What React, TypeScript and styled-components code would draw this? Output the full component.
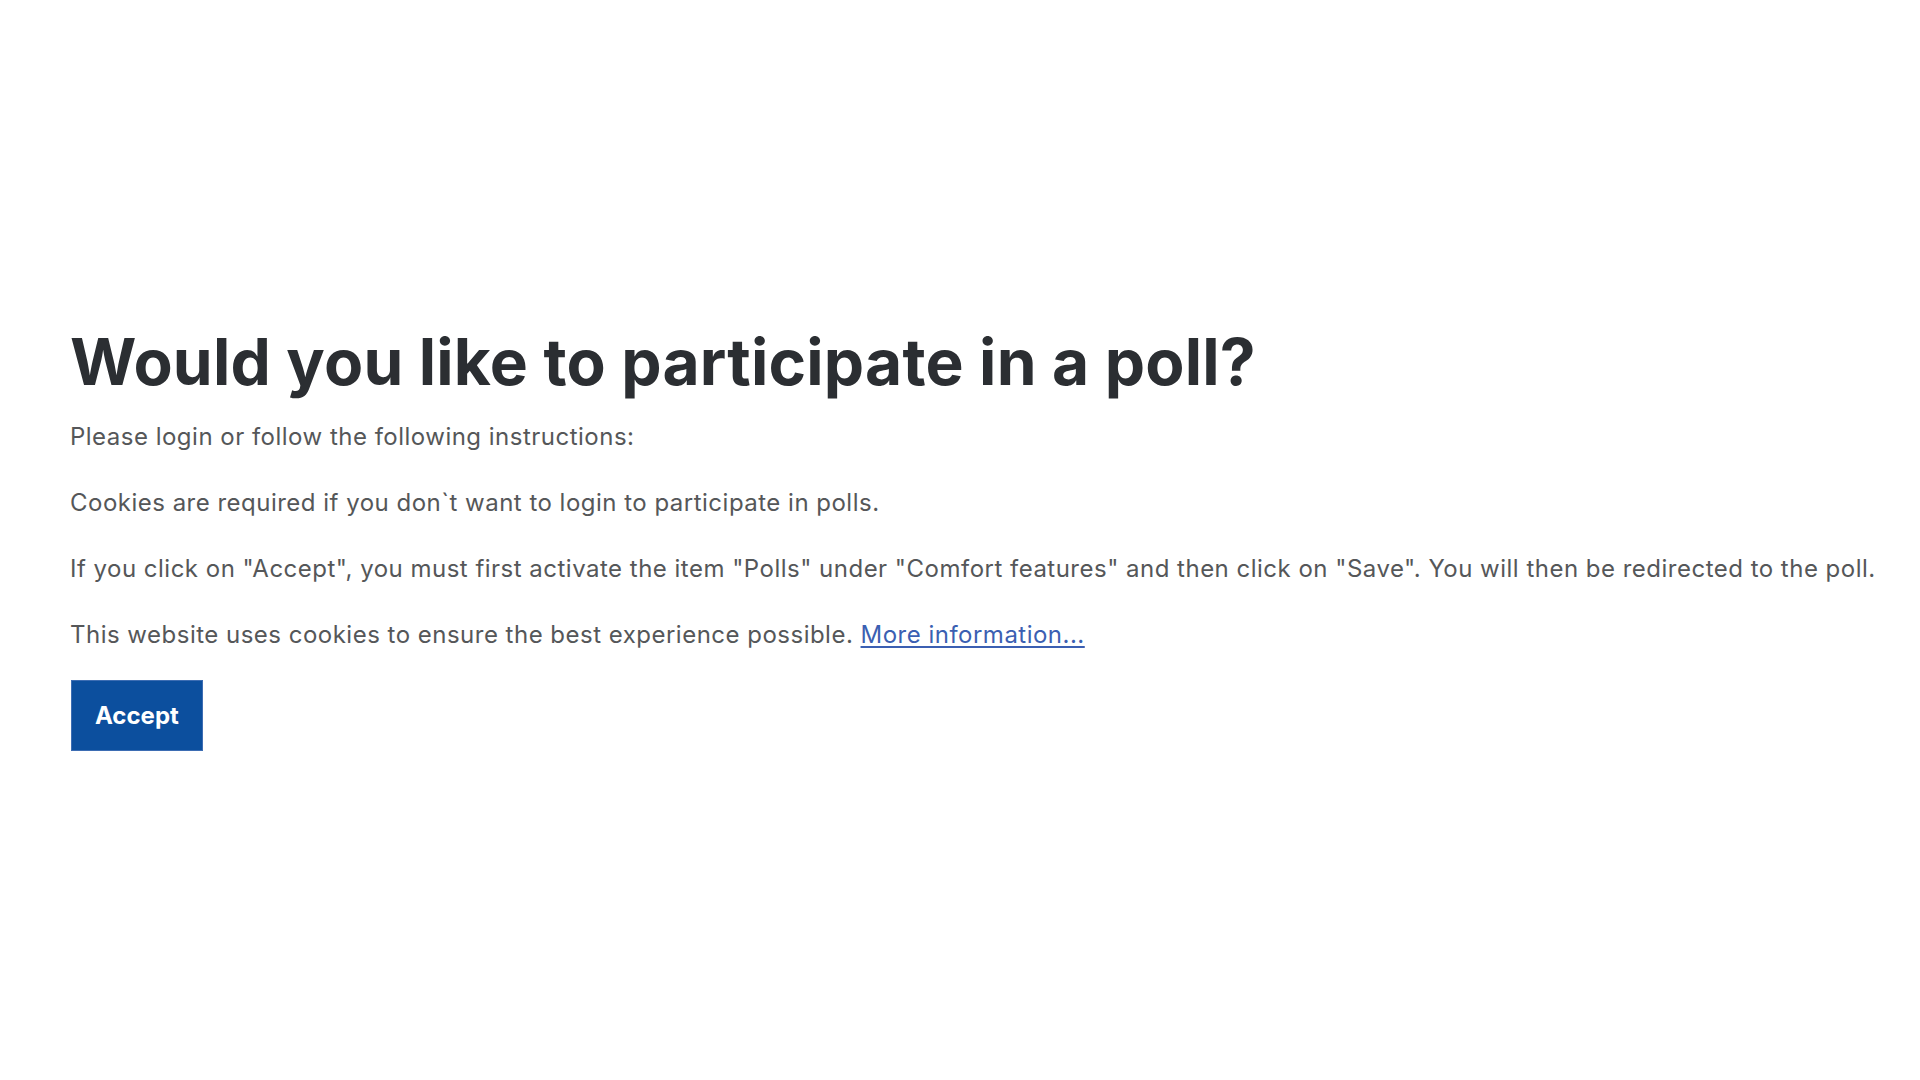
import React from 'react';
import styled, { createGlobalStyle } from 'styled-components';

const GlobalStyle = createGlobalStyle`
html, body {
  margin: 0;
  padding: 0;
  background: #ffffff;
}
body {
  font-family: Inter, "Noto Sans", "Liberation Sans", sans-serif;
}
`

const Page = styled.div`
width: 1920px;
height: 1080px;
box-sizing: border-box;
padding: 318px 0 0 70px;
display: flex;
flex-direction: column;
align-items: flex-start;
`

const Title = styled.h1`
margin: 0 0 13px;
font-size: 64px;
line-height: 88px;
font-weight: 700;
color: #2b2e32;
letter-spacing: 0.2px;
`

const Text = styled.p`
margin: 0 0 30px;
font-size: 24px;
line-height: 36px;
color: #555759;
letter-spacing: 0.49px;
&:last-of-type {
  margin-bottom: 27px;
}
`

const MoreLink = styled.a`
color: #3b5fb2;
text-decoration: underline;
text-underline-offset: 3px;
`

const AcceptButton = styled.button`
margin-left: 1px;
padding: 0 23px;
height: 71px;
border: 1px solid #3d6db3;
background: #0c4f9e;
color: #ffffff;
font-family: inherit;
font-size: 24px;
font-weight: 700;
cursor: pointer;
`

export default function App() {
    return (
        <Page>
            <GlobalStyle />
            <Title>Would you like to participate in a poll?</Title>
            <Text>Please login or follow the following instructions:</Text>
            <Text>Cookies are required if you don`t want to login to participate in polls.</Text>
            <Text>If you click on "Accept", you must first activate the item "Polls" under "Comfort features" and then click on "Save". You will then be redirected to the poll.</Text>
            <Text>This website uses cookies to ensure the best experience possible. <MoreLink href="#">More information...</MoreLink></Text>
            <AcceptButton>Accept</AcceptButton>
        </Page>
    )
}
